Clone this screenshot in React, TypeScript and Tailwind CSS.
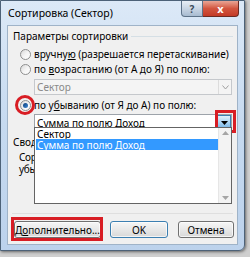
import React from "react";

function Radio({ checked = false }: { checked?: boolean }) {
  return (
    <span className="relative w-[11px] h-[11px] rounded-full border border-[#8e8f8f] bg-gradient-to-br from-[#d8d8d8] via-[#f4f4f4] to-[#ffffff] flex items-center justify-center shrink-0">
      {checked && (
        <span className="w-[5px] h-[5px] rounded-full bg-gradient-to-br from-[#0a3e7a] to-[#3f8bd8]" />
      )}
    </span>
  );
}

function Btn({
  children,
  w,
  def = false,
}: {
  children: React.ReactNode;
  w: string;
  def?: boolean;
}) {
  return (
    <div
      className={`${w} h-[17px] rounded-[3px] border ${
        def ? "border-[#3c7fb1]" : "border-[#707070]"
      } bg-gradient-to-b from-[#f6f6f6] via-[#e8e8e8] to-[#d8d8d8] flex items-center justify-center text-[10px] text-black shadow-[inset_0_0_0_1px_rgba(255,255,255,0.7)]`}
    >
      {children}
    </div>
  );
}

export default function App() {
  return (
    <div
      className="w-[250px] h-[257px] relative overflow-hidden bg-[#cfcfcf]"
      style={{ fontFamily: '"Noto Sans", "Open Sans", sans-serif' }}
    >
      {/* window */}
      <div className="w-[245px] h-[251px] bg-gradient-to-b from-[#dce9f7] via-[#c6daf0] to-[#bcd2ec] border border-[#4d6278] rounded-br-[6px] flex flex-col shadow-[1px_1px_3px_rgba(0,0,0,0.5)]">
        {/* title bar */}
        <div className="h-[23px] flex items-start shrink-0">
          <div className="pl-[7px] pt-[5px] text-[10.5px] leading-[14px] text-black">
            Сортировка (Сектор)
          </div>
          <div className="ml-auto mr-[5px] flex">
            <div className="w-[22px] h-[16px] rounded-bl-[4px] border border-t-0 border-[#5d7288] bg-gradient-to-b from-[#e8eef5] via-[#c9d6e4] to-[#a8bbd0] flex items-center justify-center text-[10px] font-bold text-[#3c4a5a] leading-none">
              ?
            </div>
            <div className="w-[36px] h-[16px] rounded-br-[4px] border border-t-0 border-l-0 border-[#6b2a22] bg-gradient-to-b from-[#e8a595] via-[#d2553f] to-[#c33a26] flex items-center justify-center text-[11px] font-bold text-white leading-none">
              x
            </div>
          </div>
        </div>
        {/* client area */}
        <div className="mx-[6px] mb-[5px] mt-[1px] flex-1 bg-[#f0f0f0] border border-[#9fb3c8] relative flex flex-col text-[10px] leading-[12px] text-black">
          {/* group header */}
          <div className="mt-[3px] ml-[5px] mr-[4px] h-[14px] flex items-center gap-[3px]">
            <span>Параметры сортировки</span>
            <span className="flex-1 border-t border-[#d5dfe5]" />
          </div>
          <div className="ml-[12px] flex flex-col">
            <div className="mt-[4px] h-[14px] flex items-center gap-[3px]">
              <Radio />
              <span>
                вручну<u>ю</u> (разрешается перетаскивание)
              </span>
            </div>
            <div className="mt-[1px] h-[14px] flex items-center gap-[3px]">
              <Radio />
              <span>
                по <u>в</u>озрастанию (от А до Я) по полю:
              </span>
            </div>
            <div className="mt-[3px] ml-[14px] w-[198px] h-[16px] border border-[#c5c8cc] bg-[#f4f4f4] flex items-center">
              <span className="pl-[2px] text-[#8a8a8a] flex-1">Сектор</span>
              <span className="w-[13px] h-full border-l border-[#dcdcdc] flex items-center justify-center">
                <svg width="7" height="5" viewBox="0 0 7 5">
                  <path d="M0.5 0.5 L3.5 4 L6.5 0.5" fill="none" stroke="#a0a0a0" strokeWidth="1" />
                </svg>
              </span>
            </div>
            <div className="mt-[3px] h-[14px] flex items-center gap-[3px] relative">
              <Radio checked />
              <span>
                по у<u>б</u>ыванию (от Я до А) по полю:
              </span>
              {/* red circle annotation */}
              <span className="absolute left-[-5px] top-[-3px] w-[20px] h-[20px] rounded-full border-[3px] border-[#d81d24]" />
            </div>
            <div className="mt-[2px] ml-[14px] w-[198px] h-[17px] border border-[#9da3aa] bg-white flex items-center relative">
              <span className="pl-[2px] flex-1 leading-[10px]">Сумма по полю Доход</span>
              <span className="w-[14px] h-[15px] border border-[#3c7fb1] bg-gradient-to-b from-[#e2f1fc] via-[#a9d3f3] to-[#6eaee0] flex items-center justify-center">
                <svg width="7" height="4" viewBox="0 0 7 4">
                  <path d="M0 0 L7 0 L3.5 4 Z" fill="#000" />
                </svg>
              </span>
              {/* red box annotation */}
              <span className="absolute right-[-5px] top-[-5px] w-[21px] h-[23px] border-[3px] border-[#d81d24]" />
            </div>
          </div>
          {/* second group: only the part left of the open dropdown is visible */}
          <div className="mt-[5px] ml-[5px]">Свод</div>
          <div className="ml-[11px] mt-[3px] leading-[12px] tracking-[-0.3px] flex flex-col">
            <span>Сор</span>
            <span>убы</span>
          </div>
          {/* bottom */}
          <div className="mt-auto mx-[4px] border-t border-[#dfdfdf]" />
          <div className="mt-[7px] mb-[6px] ml-[6px] mr-[6px] flex items-center relative">
            <Btn w="w-[87px]">
              Д<u>о</u>полнительно...
            </Btn>
            <span className="absolute left-[-3px] top-[-4px] w-[92px] h-[24px] border-[3px] border-[#d81d24]" />
            <div className="ml-[9px]">
              <Btn w="w-[58px]" def>
                OK
              </Btn>
            </div>
            <div className="ml-[10px]">
              <Btn w="w-[56px]">Отмена</Btn>
            </div>
          </div>
          {/* dropdown list (overlay) */}
          <div className="absolute left-[26px] top-[101px] w-[198px] h-[77px] bg-white border border-[#646464] flex">
            <div className="flex-1 flex flex-col pt-[1px] pl-[1px] leading-[10px]">
              <div className="h-[10px] flex items-center pl-[1px]">Сектор</div>
              <div className="h-[11px] flex items-center pl-[1px] bg-[#3399ff] text-white">
                Сумма по полю Доход
              </div>
            </div>
            <div className="w-[13px] h-full bg-[#f3f3f3] border-l border-[#e6e6e6] flex flex-col items-center justify-between py-[3px]">
              <svg width="7" height="4" viewBox="0 0 7 4">
                <path d="M0 4 L7 4 L3.5 0 Z" fill="#a5a5a5" />
              </svg>
              <svg width="7" height="4" viewBox="0 0 7 4">
                <path d="M0 0 L7 0 L3.5 4 Z" fill="#a5a5a5" />
              </svg>
            </div>
          </div>
        </div>
      </div>
    </div>
  );
}
